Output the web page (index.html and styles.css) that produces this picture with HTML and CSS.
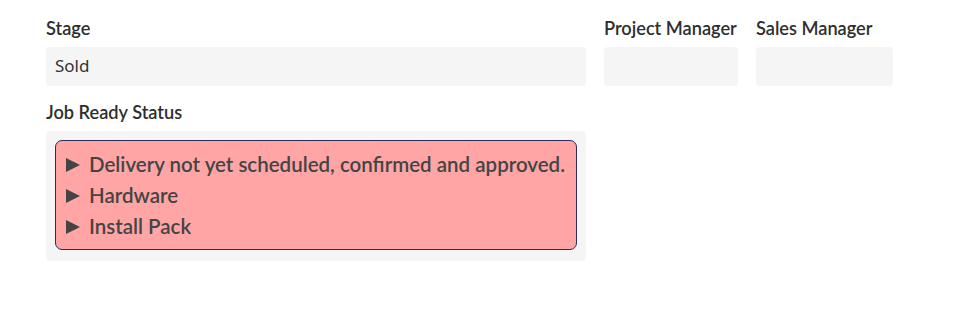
FILE: index.html
```html
<!DOCTYPE html>
<html lang="en">
<head>
  <meta charset="UTF-8">
  <title>Job Details</title>
  <link rel="stylesheet" href="styles.css">
</head>
<body>
  <div class="form">
    <div class="row">
      <div class="field stage">
        <label>Stage</label>
        <div class="value">Sold</div>
      </div>
      <div class="field pm">
        <label>Project Manager</label>
        <div class="value"></div>
      </div>
      <div class="field sm">
        <label>Sales Manager</label>
        <div class="value"></div>
      </div>
    </div>
    <div class="field stage">
      <label>Job Ready Status</label>
      <div class="status-wrap">
        <ul class="status">
          <li>Delivery not yet scheduled, confirmed and approved.</li>
          <li>Hardware</li>
          <li>Install Pack</li>
        </ul>
      </div>
    </div>
  </div>
</body>
</html>
```

FILE: styles.css
```css
* { box-sizing: border-box; margin: 0; padding: 0; }
body { font-family: Lato, 'Liberation Sans', sans-serif; background: #fff; color: #333; }
.form { padding: 17px 0 0 46px; display: flex; flex-direction: column; gap: 15px; }
.row { display: flex; gap: 18px; }
.field { display: flex; flex-direction: column; }
.field label { font-weight: 600; font-size: 18.2px; line-height: 22px; margin-bottom: 8px; color: #2e2e2e; white-space: nowrap; }
.stage { width: 540px; }
.pm { width: 134px; }
.sm { width: 137px; }
.value { height: 39px; background: #f5f5f5; border-radius: 4px; padding: 0 9px; font-family: 'Noto Sans', 'Open Sans', sans-serif; font-size: 17px; line-height: 37px; color: #333; }
.status-wrap { background: #f5f5f5; border-radius: 4px; padding: 9px 9px 11px; }
.status { list-style: none; background: #ffa5a5; border: 1px solid #2b2b5e; border-radius: 7px; padding: 8px 9px 7px 10px; }
.status li { display: flex; align-items: center; font-size: 20.5px; font-weight: 600; line-height: 31px; color: #444; white-space: nowrap; }
.status li::before { content: ""; border-left: 14px solid #444; border-top: 7px solid transparent; border-bottom: 7px solid transparent; margin-right: 9px; }
```
